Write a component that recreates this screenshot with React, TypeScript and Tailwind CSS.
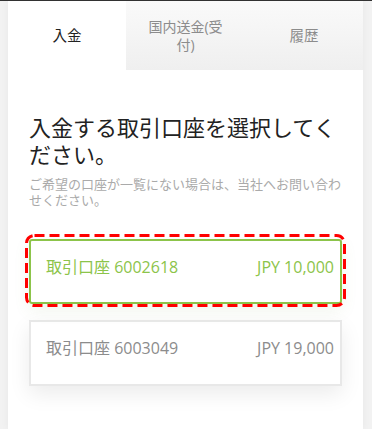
const font = "font-['Open_Sans','Noto_Sans_CJK_JP',sans-serif]";

const accounts = [
  { id: "6002618", amount: "JPY 10,000", selected: true },
  { id: "6003049", amount: "JPY 19,000", selected: false },
];

function DashedHighlight() {
  return (
    <svg className="absolute -top-[7px] -left-[6px] w-[calc(100%+12px)] h-[calc(100%+12px)] pointer-events-none overflow-visible">
      <rect
        x="1.5"
        y="1.5"
        width="calc(100% - 3px)"
        height="calc(100% - 3px)"
        rx="8"
        fill="none"
        stroke="#ff0000"
        strokeWidth="3"
        strokeDasharray="10 5"
      />
    </svg>
  );
}

export default function App() {
  return (
    <div className={`${font} min-h-[429px] bg-[#f2f2f2] border-t border-[#333] pl-2 pr-[9px]`}>
      <div className="bg-white shadow-[0_0_8px_rgba(0,0,0,0.05)] min-h-[428px]">
        {/* Tabs */}
        <div className="grid grid-cols-[118px_119px_1fr] h-[69px] bg-linear-to-b from-[#fafafa] to-[#efefef]">
          <div className="flex items-center justify-center bg-white text-[14.5px] leading-[18px] text-[#222]">入金</div>
          <div className="flex items-center justify-center px-4 text-center text-[14px] leading-[18px] text-[#8c8c8c]">
            国内送金(受付)
          </div>
          <div className="flex items-center justify-center text-[14.5px] leading-[18px] text-[#8c8c8c]">履歴</div>
        </div>

        {/* Content */}
        <div className="px-[21px] pt-[44px] pb-10">
          <h1 className="text-[22px] leading-[27px] text-[#222] font-normal">
            入金する取引口座を選択してください。
          </h1>
          <p className="mt-[9px] text-[13px] leading-[15.5px] text-[#aaa]">
            ご希望の口座が一覧にない場合は、当社へお問い合わせください。
          </p>

          <div className="mt-[31px] flex flex-col gap-4">
            {accounts.map((a) =>
              a.selected ? (
                <div
                  key={a.id}
                  className="relative h-[65px] flex justify-between items-start pt-[15px] pl-[15px] pr-[6px] border-2 border-[#8cc44a] rounded-[3px] shadow-[0_6px_16px_rgba(120,160,80,0.10)] text-[16px] leading-[22px] text-[#8cc44a]"
                >
                  <span>取引口座 {a.id}</span>
                  <span>{a.amount}</span>
                  <DashedHighlight />
                </div>
              ) : (
                <div
                  key={a.id}
                  className="h-[66px] flex justify-between items-start pt-[15px] pl-[15px] pr-[6px] border-2 border-[#e8e8e8] shadow-[0_8px_20px_rgba(0,0,0,0.08)] text-[16px] leading-[22px] text-[#8c8c8c]"
                >
                  <span>取引口座 {a.id}</span>
                  <span>{a.amount}</span>
                </div>
              )
            )}
          </div>
        </div>
      </div>
    </div>
  );
}
